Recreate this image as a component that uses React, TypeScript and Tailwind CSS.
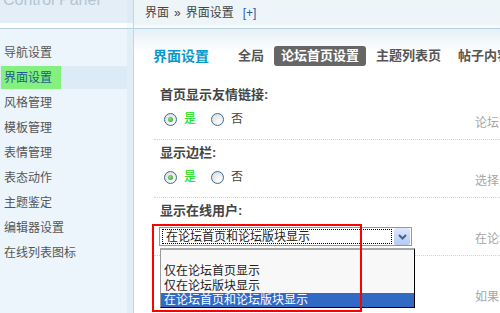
const menu = ['导航设置', '界面设置', '风格管理', '模板管理', '表情管理', '表态动作', '主题鉴定', '编辑器设置', '在线列表图标'];
const tabs = ['全局', '论坛首页设置', '主题列表页', '帖子内容页'];

function Radio({ checked }: { checked?: boolean }) {
  return (
    <span className="flex h-[13px] w-[13px] items-center justify-center rounded-full border border-[#3f6b95] bg-[radial-gradient(circle_at_65%_70%,#ffffff,#d6d6d6)]">
      {checked && <span className="h-[5px] w-[5px] rounded-full bg-[radial-gradient(circle_at_40%_40%,#8ee08e,#1f9a1f)]" />}
    </span>
  );
}

function YesNo() {
  return (
    <div className="mt-[9px] flex h-[16px] items-center pl-[10px] text-[12px]">
      <Radio checked />
      <span className="ml-[7px] text-[#00dd00]">是</span>
      <span className="ml-[15px]">
        <Radio />
      </span>
      <span className="ml-[7px] text-[#444]">否</span>
    </div>
  );
}

function Row({ label, hint, children }: { label?: string; hint: string; children?: React.ReactNode }) {
  return (
    <div className="relative flex h-[58px] border-b border-dotted border-[#c2d7e5]">
      <div className="relative w-[321px] shrink-0">
        {label && <div className="pl-[6px] pt-[5px] text-[13px] font-bold leading-[15px] text-[#444]">{label}</div>}
        {children}
      </div>
      <div className="whitespace-nowrap pt-[34px] text-[12px] leading-[15px] text-[#a6a6a6]">{hint}</div>
    </div>
  );
}

function SelectBox() {
  return (
    <div className="relative ml-[5px] mt-[9px] h-[19px] w-[253px]">
      <div className="flex h-[19px] items-center border border-[#7f9db9] bg-white pl-[2px] pr-[1px]">
        <div className="flex h-[15px] flex-1 items-center border border-dotted border-black pl-[3px] text-[12px] leading-none text-[#222]">
          在论坛首页和论坛版块显示
        </div>
        <div className="ml-[2px] flex h-[17px] w-[16px] items-center justify-center rounded-[2px] bg-[linear-gradient(#dde8fe,#b4c9f7)]">
          <svg width="9" height="6" viewBox="0 0 9 6">
            <polyline points="1,1 4.5,4.5 8,1" fill="none" stroke="#4a5f86" strokeWidth="2" />
          </svg>
        </div>
      </div>
      <div className="absolute left-[1px] top-[21px] z-10 w-[255px] border-l border-t-2 border-r border-b border-l-[#9a9a9a] border-t-[#a8a8a8] border-r-black border-b-black bg-[#f8f8f8] text-[12px] text-[#222]">
        <div className="h-[13px]" />
        <div className="flex h-[15px] items-center pl-[3px]">仅在论坛首页显示</div>
        <div className="flex h-[15px] items-center pl-[3px]">仅在论坛版块显示</div>
        <div className="flex h-[14px] items-center bg-[#316ac5] pl-[3px] text-white">在论坛首页和论坛版块显示</div>
      </div>
    </div>
  );
}

export default function App() {
  return (
    <div className="flex h-[313px] w-[500px] overflow-hidden bg-white font-['Liberation_Sans','Noto_Sans_CJK_SC',sans-serif]">
      <aside className="flex w-[134px] shrink-0 border-r border-[#bfd7e6] bg-[#ecf5fb]">
        <div className="w-[127px]">
          <div className="h-[23px] overflow-hidden bg-[#e3eef7]">
            <div className="-mt-[8px] pl-[3px] text-[16px] leading-[16px] text-[#b3c5d3]">Control Panel</div>
          </div>
          <div className="h-[5px] bg-white" />
          <div className="h-px bg-[#b6d2e0]" />
          <nav className="pt-[12px]">
            {menu.map((item, i) => (
              <div key={item} className="h-[25px]">
                <div className={`flex h-[23px] items-center ${i === 1 ? 'bg-[#dcebf6]' : ''}`}>
                  {i === 1 ? (
                    <span className="ml-[1px] flex h-[23px] w-[60px] items-center bg-[#84f07e] pl-[3px] text-[12px] text-[#1e5c8c]">
                      {item}
                    </span>
                  ) : (
                    <span className="pl-[4px] text-[12px] text-[#555]">{item}</span>
                  )}
                </div>
              </div>
            ))}
          </nav>
        </div>
        <div className="flex-1 bg-[#e2eef6]">
          <div className="h-[23px] bg-[#dfebf4]" />
          <div className="h-[5px] bg-[#f4f9fc]" />
          <div className="h-px bg-[#b6d2e0]" />
        </div>
      </aside>

      <main className="min-w-0 flex-1">
        <div className="flex h-[25px] items-center whitespace-nowrap bg-[#eef5f9] pl-[11px] text-[12px] text-[#444]">
          <span>界面</span>
          <span className="mx-[5px]">»</span>
          <span>界面设置</span>
          <span className="ml-[9px] text-[#1f5fa6]">[+]</span>
        </div>
        <div className="h-[3px] bg-[#f6fafc]" />
        <div className="h-px bg-[#b6d2e0]" />

        <div className="bg-[linear-gradient(to_bottom,#e6f0f6,#ffffff_24px)] pt-[17px]">
          <div className="flex h-[20px] items-center whitespace-nowrap pl-[19px]">
            <span className="text-[14px] font-bold text-[#0899cc]">界面设置</span>
            <div className="ml-[22px] flex gap-[3px]">
              {tabs.map((t, i) => (
                <span
                  key={t}
                  className={`flex h-[20px] items-center rounded-[3px] px-[7px] text-[13px] font-bold ${
                    i === 1 ? 'bg-[#666] text-white' : 'text-[#555]'
                  }`}
                >
                  {t}
                </span>
              ))}
            </div>
          </div>

          <div className="mt-[16px] pl-[20px]">
            <Row label="首页显示友情链接:" hint="论坛首页是否显示友情链接">
              <YesNo />
            </Row>
            <Row label="显示边栏:" hint="选择是否在论坛首页显示边栏">
              <YesNo />
            </Row>
            <div className="relative z-10">
              <Row label="显示在线用户:" hint="在论坛首页和论坛版块显示在线用户">
                <SelectBox />
                <div className="pointer-events-none absolute left-[-2px] top-[26px] z-20 h-[88px] w-[210px] border-2 border-[#ff0000]" />
              </Row>
            </div>
            <Row hint="如果设置为显示，将显示在线列表" />
          </div>
        </div>
      </main>
    </div>
  );
}
